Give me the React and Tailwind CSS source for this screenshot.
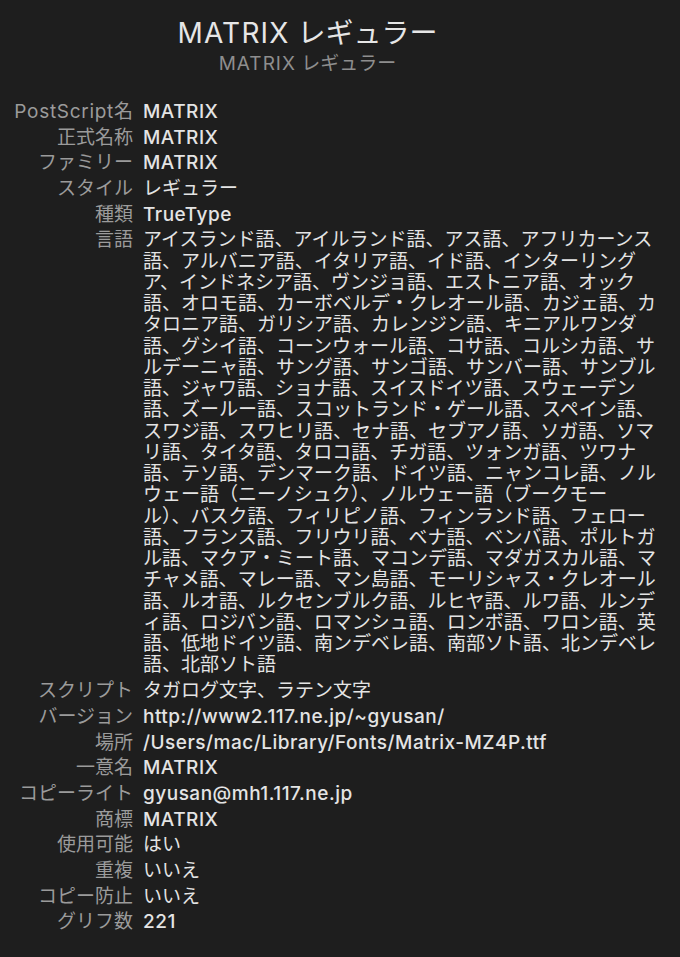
import React from "react";

const font = { fontFamily: 'Inter, "Noto Sans CJK JP", sans-serif' };

const languages = [
  "アイスランド語、アイルランド語、アス語、アフリカーンス",
  "語、アルバニア語、イタリア語、イド語、インターリング",
  "ア、インドネシア語、ヴンジョ語、エストニア語、オック",
  "語、オロモ語、カーボベルデ・クレオール語、カジェ語、カ",
  "タロニア語、ガリシア語、カレンジン語、キニアルワンダ",
  "語、グシイ語、コーンウォール語、コサ語、コルシカ語、サ",
  "ルデーニャ語、サング語、サンゴ語、サンバー語、サンブル",
  "語、ジャワ語、ショナ語、スイスドイツ語、スウェーデン",
  "語、ズールー語、スコットランド・ゲール語、スペイン語、",
  "スワジ語、スワヒリ語、セナ語、セブアノ語、ソガ語、ソマ",
  "リ語、タイタ語、タロコ語、チガ語、ツォンガ語、ツワナ",
  "語、テソ語、デンマーク語、ドイツ語、ニャンコレ語、ノル",
  "ウェー語（ニーノシュク）、ノルウェー語（ブークモー",
  "ル）、バスク語、フィリピノ語、フィンランド語、フェロー",
  "語、フランス語、フリウリ語、ベナ語、ベンバ語、ポルトガ",
  "ル語、マクア・ミート語、マコンデ語、マダガスカル語、マ",
  "チャメ語、マレー語、マン島語、モーリシャス・クレオール",
  "語、ルオ語、ルクセンブルク語、ルヒヤ語、ルワ語、ルンデ",
  "ィ語、ロジバン語、ロマンシュ語、ロンボ語、ワロン語、英",
  "語、低地ドイツ語、南ンデベレ語、南部ソト語、北ンデベレ",
  "語、北部ソト語",
];

// latin values get a bit of tracking so Inter runs as wide as the mac font
const before = [
  ["正式名称", "MATRIX", true],
  ["ファミリー", "MATRIX", true],
  ["スタイル", "レギュラー", false],
  ["種類", "TrueType", true],
];

const after = [
  ["スクリプト", "タガログ文字、ラテン文字", false],
  ["バージョン", "http://www2.117.ne.jp/~gyusan/", true],
  ["場所", "/Users/mac/Library/Fonts/Matrix-MZ4P.ttf", true],
  ["一意名", "MATRIX", true],
  ["コピーライト", "gyusan@mh1.117.ne.jp", true],
  ["商標", "MATRIX", true],
  ["使用可能", "はい", false],
  ["重複", "いいえ", false],
  ["コピー防止", "いいえ", false],
  ["グリフ数", "221", true],
];

function Row({ label, latin, children }) {
  return (
    <>
      <div className="text-right text-[#9b9b9b] whitespace-nowrap">{label}</div>
      <div className={`text-[#e4e4e4] whitespace-nowrap ${latin ? "font-medium tracking-[0.5px]" : ""}`}>
        {children}
      </div>
    </>
  );
}

export default function App() {
  return (
    <div className="min-h-screen bg-[#1e1e1e] antialiased" style={font}>
      <div className="w-[615px] pt-[16px] text-center">
        <h1 className="text-[28px] leading-[34px] text-[#e6e6e6]">
          <span className="tracking-[1.2px]">MATRIX</span> レギュラー
        </h1>
        <p className="text-[19px] leading-[22px] text-[#8e8e8e] mt-[3px]">
          <span className="tracking-[1px]">MATRIX</span> レギュラー
        </p>
      </div>

      <div className="mt-[26px] grid grid-cols-[133px_1fr] gap-x-[10px] gap-y-[4.45px] text-[19px] leading-[21.25px]">
        <Row latin label={<><span className="tracking-[0.7px]">PostScript</span>名</>}>MATRIX</Row>
        {before.map(([l, v, lat]) => (
          <Row key={l} label={l} latin={lat}>{v}</Row>
        ))}
        <Row label="言語">
          {languages.map((line, i) => (
            <div key={i}>{line}</div>
          ))}
        </Row>
        {after.map(([l, v, lat]) => (
          <Row key={l} label={l} latin={lat}>{v}</Row>
        ))}
      </div>
    </div>
  );
}
